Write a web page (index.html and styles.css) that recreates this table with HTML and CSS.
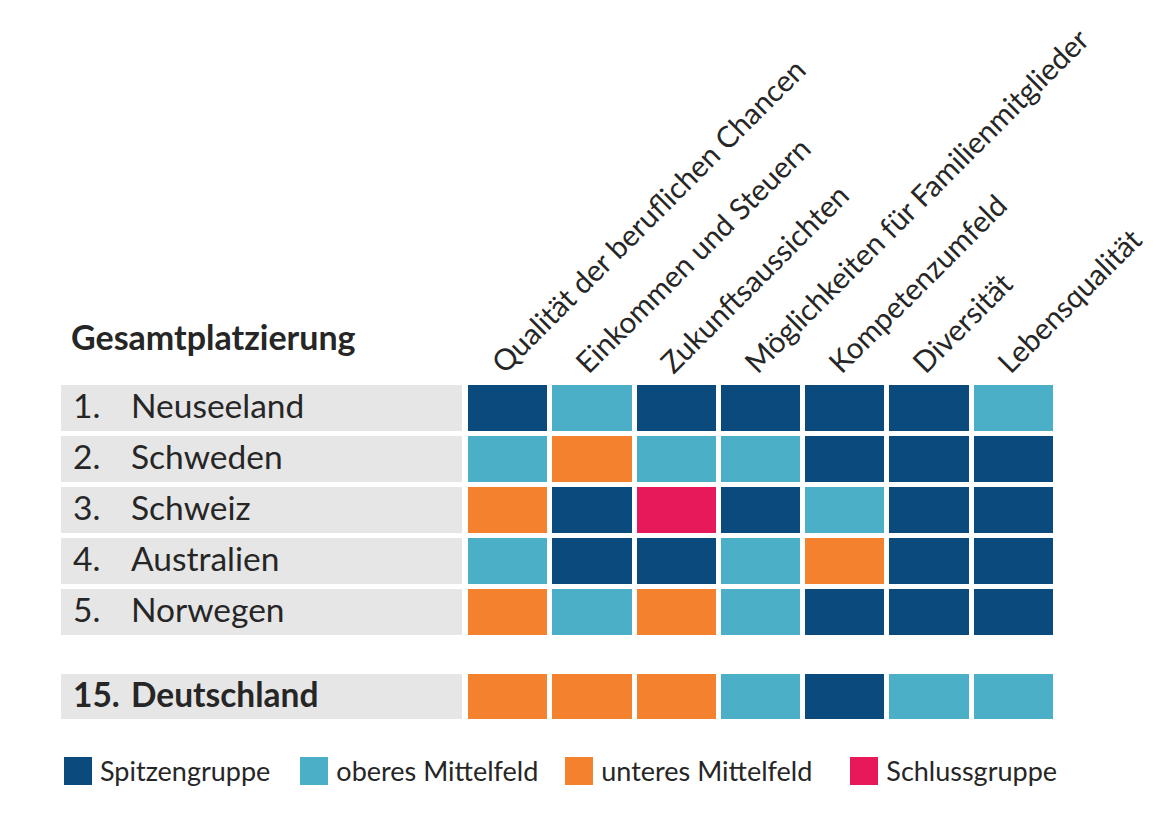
FILE: index.html
```html
<!DOCTYPE html>
<html lang="de">
<head>
<meta charset="utf-8">
<title>Gesamtplatzierung</title>
<link rel="stylesheet" href="styles.css">
</head>
<body>
<main class="chart">
  <div class="head">
    <div class="head-title">Gesamtplatzierung</div>
    <div class="col-label"><span>Qualität der beruflichen Chancen</span></div>
    <div class="col-label"><span>Einkommen und Steuern</span></div>
    <div class="col-label"><span>Zukunftsaussichten</span></div>
    <div class="col-label"><span>Möglichkeiten für Familienmitglieder</span></div>
    <div class="col-label"><span>Kompetenzumfeld</span></div>
    <div class="col-label"><span>Diversität</span></div>
    <div class="col-label"><span>Lebensqualität</span></div>
  </div>

  <div class="rows">
    <div class="row">
      <div class="row-label"><span class="rank">1.</span><span>Neuseeland</span></div>
      <div class="cell top"></div><div class="cell upper"></div><div class="cell top"></div><div class="cell top"></div><div class="cell top"></div><div class="cell top"></div><div class="cell upper"></div>
    </div>
    <div class="row">
      <div class="row-label"><span class="rank">2.</span><span>Schweden</span></div>
      <div class="cell upper"></div><div class="cell lower"></div><div class="cell upper"></div><div class="cell upper"></div><div class="cell top"></div><div class="cell top"></div><div class="cell top"></div>
    </div>
    <div class="row">
      <div class="row-label"><span class="rank">3.</span><span>Schweiz</span></div>
      <div class="cell lower"></div><div class="cell top"></div><div class="cell last"></div><div class="cell top"></div><div class="cell upper"></div><div class="cell top"></div><div class="cell top"></div>
    </div>
    <div class="row">
      <div class="row-label"><span class="rank">4.</span><span>Australien</span></div>
      <div class="cell upper"></div><div class="cell top"></div><div class="cell top"></div><div class="cell upper"></div><div class="cell lower"></div><div class="cell top"></div><div class="cell top"></div>
    </div>
    <div class="row">
      <div class="row-label"><span class="rank">5.</span><span>Norwegen</span></div>
      <div class="cell lower"></div><div class="cell upper"></div><div class="cell lower"></div><div class="cell upper"></div><div class="cell top"></div><div class="cell top"></div><div class="cell top"></div>
    </div>
  </div>

  <div class="row row--home">
    <div class="row-label"><span class="rank">15.</span><span>Deutschland</span></div>
    <div class="cell lower"></div><div class="cell lower"></div><div class="cell lower"></div><div class="cell upper"></div><div class="cell top"></div><div class="cell upper"></div><div class="cell upper"></div>
  </div>

  <ul class="legend">
    <li class="legend-item"><span class="swatch top"></span>Spitzengruppe</li>
    <li class="legend-item legend-item--second"><span class="swatch upper"></span>oberes Mittelfeld</li>
    <li class="legend-item legend-item--third"><span class="swatch lower"></span>unteres Mittelfeld</li>
    <li class="legend-item legend-item--fourth"><span class="swatch last"></span>Schlussgruppe</li>
  </ul>
</main>
</body>
</html>
```

FILE: styles.css
```css
* { box-sizing: border-box; }

html, body {
  margin: 0;
  padding: 0;
  background: #ffffff;
}

body {
  font-family: Lato, "Open Sans", "Liberation Sans", sans-serif;
  color: #262626;
  width: 1163px;
  height: 813px;
  overflow: hidden;
}

.chart {
  padding-left: 61px;
}

.head,
.row {
  display: grid;
  grid-template-columns: 402px repeat(7, 79.3px);
  column-gap: 5px;
}

.head {
  height: 385px;
  align-items: end;
}

.head-title {
  font-size: 34px;
  font-weight: 700;
  line-height: 1;
  padding-left: 10px;
  margin-bottom: 31px;
  white-space: nowrap;
}

.col-label {
  display: flex;
  align-items: flex-end;
  padding-left: 39px;
  height: 100%;
}

.col-label span {
  display: block;
  white-space: nowrap;
  font-size: 29.5px;
  font-weight: 400;
  line-height: 1;
  margin-bottom: 8px;
  transform-origin: 0 100%;
  transform: rotate(-45deg);
}

.rows {
  display: grid;
  row-gap: 5px;
}

.row {
  height: 46px;
}

.row-label {
  display: flex;
  align-items: flex-start;
  margin-right: 1px;
  padding-left: 12px;
  background: #e6e6e6;
  font-size: 33.5px;
  line-height: 40px;
  white-space: nowrap;
}

.rank {
  width: 58px;
  flex: none;
}

.row--home {
  margin-top: 39px;
  height: 45px;
}

.row--home .row-label {
  font-weight: 700;
}

.cell { height: 100%; }

.top { background: #0b4a7d; }
.upper { background: #4aafc7; }
.lower { background: #f4812e; }
.last { background: #e8195a; }

.legend {
  list-style: none;
  margin: 38px 0 0;
  padding: 0 0 0 3px;
  display: flex;
  align-items: center;
}

.legend-item {
  display: flex;
  align-items: center;
  gap: 8px;
  font-size: 27px;
  line-height: 28px;
  white-space: nowrap;
}

.legend-item--second { margin-left: 30px; }
.legend-item--third { margin-left: 27px; }
.legend-item--fourth { margin-left: 38px; }

.swatch {
  display: block;
  width: 28px;
  height: 28px;
  flex: none;
}
```
